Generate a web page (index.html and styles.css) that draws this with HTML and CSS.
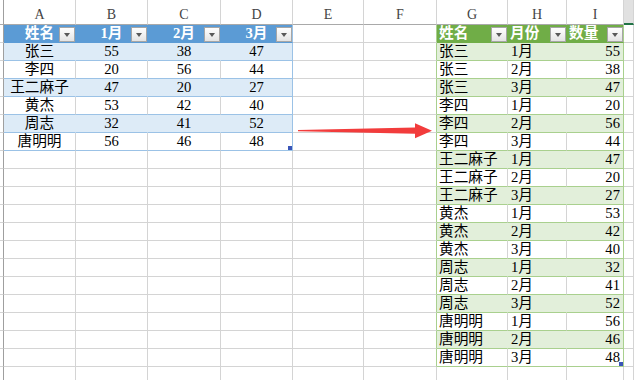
FILE: index.html
```html
<!DOCTYPE html>
<html lang="zh">
<head>
<meta charset="utf-8">
<title>Sheet</title>
<link rel="stylesheet" href="styles.css">
</head>
<body>
<div class="sheet">
  <div class="row hdr">
    <div class="c rhd"></div>
    <div class="c ch">A</div><div class="c ch">B</div><div class="c ch">C</div><div class="c ch">D</div>
    <div class="c ch">E</div><div class="c ch">F</div><div class="c ch">G</div><div class="c ch">H</div>
    <div class="c ch">I</div><div class="c ch sel"></div>
  </div>

  <div class="row">
    <div class="c rhd"></div>
    <div class="c lh ctr">姓名<span class="dd"></span></div>
    <div class="c lh ctr">1月<span class="dd"></span></div>
    <div class="c lh ctr">2月<span class="dd"></span></div>
    <div class="c lh le ctr">3月<span class="dd"></span></div>
    <div class="c"></div><div class="c fe"></div>
    <div class="c gh">姓名<span class="dd"></span></div>
    <div class="c gh">月份<span class="dd"></span></div>
    <div class="c gh ge">数量<span class="dd"></span></div>
    <div class="c"></div>
  </div>

  <div class="row">
    <div class="c rhd"></div>
    <div class="c l1 ctr">张三</div><div class="c l1 ctr">55</div><div class="c l1 ctr">38</div><div class="c l1 le ctr">47</div>
    <div class="c"></div><div class="c fe"></div>
    <div class="c g1 nm">张三</div><div class="c g1 mo">1月</div><div class="c g1 ge num">55</div>
    <div class="c"></div>
  </div>

  <div class="row">
    <div class="c rhd"></div>
    <div class="c l0 ctr">李四</div><div class="c l0 ctr">20</div><div class="c l0 ctr">56</div><div class="c l0 le ctr">44</div>
    <div class="c"></div><div class="c fe"></div>
    <div class="c g0 nm">张三</div><div class="c g0 mo">2月</div><div class="c g0 ge num">38</div>
    <div class="c"></div>
  </div>

  <div class="row">
    <div class="c rhd"></div>
    <div class="c l1 ctr">王二麻子</div><div class="c l1 ctr">47</div><div class="c l1 ctr">20</div><div class="c l1 le ctr">27</div>
    <div class="c"></div><div class="c fe"></div>
    <div class="c g1 nm">张三</div><div class="c g1 mo">3月</div><div class="c g1 ge num">47</div>
    <div class="c"></div>
  </div>

  <div class="row">
    <div class="c rhd"></div>
    <div class="c l0 ctr">黄杰</div><div class="c l0 ctr">53</div><div class="c l0 ctr">42</div><div class="c l0 le ctr">40</div>
    <div class="c"></div><div class="c fe"></div>
    <div class="c g0 nm">李四</div><div class="c g0 mo">1月</div><div class="c g0 ge num">20</div>
    <div class="c"></div>
  </div>

  <div class="row">
    <div class="c rhd"></div>
    <div class="c l1 ctr">周志</div><div class="c l1 ctr">32</div><div class="c l1 ctr">41</div><div class="c l1 le ctr">52</div>
    <div class="c"></div><div class="c fe"></div>
    <div class="c g1 nm">李四</div><div class="c g1 mo">2月</div><div class="c g1 ge num">56</div>
    <div class="c"></div>
  </div>

  <div class="row">
    <div class="c rhd"></div>
    <div class="c l0 ctr">唐明明</div><div class="c l0 ctr">56</div><div class="c l0 ctr">46</div><div class="c l0 le ctr">48<span class="handle"></span></div>
    <div class="c"></div><div class="c fe"></div>
    <div class="c g0 nm">李四</div><div class="c g0 mo">3月</div><div class="c g0 ge num">44</div>
    <div class="c"></div>
  </div>

  <div class="row">
    <div class="c rhd"></div>
    <div class="c"></div><div class="c"></div><div class="c"></div><div class="c"></div>
    <div class="c"></div><div class="c fe"></div>
    <div class="c g1 nm">王二麻子</div><div class="c g1 mo">1月</div><div class="c g1 ge num">47</div>
    <div class="c"></div>
  </div>

  <div class="row">
    <div class="c rhd"></div>
    <div class="c"></div><div class="c"></div><div class="c"></div><div class="c"></div>
    <div class="c"></div><div class="c fe"></div>
    <div class="c g0 nm">王二麻子</div><div class="c g0 mo">2月</div><div class="c g0 ge num">20</div>
    <div class="c"></div>
  </div>

  <div class="row">
    <div class="c rhd"></div>
    <div class="c"></div><div class="c"></div><div class="c"></div><div class="c"></div>
    <div class="c"></div><div class="c fe"></div>
    <div class="c g1 nm">王二麻子</div><div class="c g1 mo">3月</div><div class="c g1 ge num">27</div>
    <div class="c"></div>
  </div>

  <div class="row">
    <div class="c rhd"></div>
    <div class="c"></div><div class="c"></div><div class="c"></div><div class="c"></div>
    <div class="c"></div><div class="c fe"></div>
    <div class="c g0 nm">黄杰</div><div class="c g0 mo">1月</div><div class="c g0 ge num">53</div>
    <div class="c"></div>
  </div>

  <div class="row">
    <div class="c rhd"></div>
    <div class="c"></div><div class="c"></div><div class="c"></div><div class="c"></div>
    <div class="c"></div><div class="c fe"></div>
    <div class="c g1 nm">黄杰</div><div class="c g1 mo">2月</div><div class="c g1 ge num">42</div>
    <div class="c"></div>
  </div>

  <div class="row">
    <div class="c rhd"></div>
    <div class="c"></div><div class="c"></div><div class="c"></div><div class="c"></div>
    <div class="c"></div><div class="c fe"></div>
    <div class="c g0 nm">黄杰</div><div class="c g0 mo">3月</div><div class="c g0 ge num">40</div>
    <div class="c"></div>
  </div>

  <div class="row">
    <div class="c rhd"></div>
    <div class="c"></div><div class="c"></div><div class="c"></div><div class="c"></div>
    <div class="c"></div><div class="c fe"></div>
    <div class="c g1 nm">周志</div><div class="c g1 mo">1月</div><div class="c g1 ge num">32</div>
    <div class="c"></div>
  </div>

  <div class="row">
    <div class="c rhd"></div>
    <div class="c"></div><div class="c"></div><div class="c"></div><div class="c"></div>
    <div class="c"></div><div class="c fe"></div>
    <div class="c g0 nm">周志</div><div class="c g0 mo">2月</div><div class="c g0 ge num">41</div>
    <div class="c"></div>
  </div>

  <div class="row">
    <div class="c rhd"></div>
    <div class="c"></div><div class="c"></div><div class="c"></div><div class="c"></div>
    <div class="c"></div><div class="c fe"></div>
    <div class="c g1 nm">周志</div><div class="c g1 mo">3月</div><div class="c g1 ge num">52</div>
    <div class="c"></div>
  </div>

  <div class="row">
    <div class="c rhd"></div>
    <div class="c"></div><div class="c"></div><div class="c"></div><div class="c"></div>
    <div class="c"></div><div class="c fe"></div>
    <div class="c g0 nm">唐明明</div><div class="c g0 mo">1月</div><div class="c g0 ge num">56</div>
    <div class="c"></div>
  </div>

  <div class="row">
    <div class="c rhd"></div>
    <div class="c"></div><div class="c"></div><div class="c"></div><div class="c"></div>
    <div class="c"></div><div class="c fe"></div>
    <div class="c g1 nm">唐明明</div><div class="c g1 mo">2月</div><div class="c g1 ge num">46</div>
    <div class="c"></div>
  </div>

  <div class="row">
    <div class="c rhd"></div>
    <div class="c"></div><div class="c"></div><div class="c"></div><div class="c"></div>
    <div class="c"></div><div class="c fe"></div>
    <div class="c g0 nm">唐明明</div><div class="c g0 mo">3月</div><div class="c g0 ge num">48<span class="handle"></span></div>
    <div class="c"></div>
  </div>

  <div class="row">
    <div class="c rhd"></div>
    <div class="c"></div><div class="c"></div><div class="c"></div><div class="c"></div>
    <div class="c"></div><div class="c"></div>
    <div class="c"></div><div class="c"></div><div class="c"></div>
    <div class="c"></div>
  </div>

  <svg class="arrow" width="634" height="380" viewBox="0 0 634 380" aria-hidden="true">
    <polygon points="298,130 415,127.4 415,123.3 432,130.7 415,138.3 415,133.8 298,131.3" fill="#f23c3c"/>
  </svg>
</div>
</body>
</html>
```

FILE: styles.css
```css
html, body {
  margin: 0;
  padding: 0;
  background: #fff;
}

.sheet {
  position: relative;
  width: 634px;
  height: 380px;
  overflow: hidden;
  font-family: "Liberation Serif", "Noto Sans CJK SC", sans-serif;
  font-size: 14.67px;
  color: #000;
}

.row {
  display: grid;
  grid-template-columns: 4px 72px 72px 73px 72px 71px 73px 71px 59px 57px 10px;
  height: 18px;
}

.row.hdr {
  height: 25px;
}

.c {
  position: relative;
  box-sizing: border-box;
  border-right: 1px solid #d4d4d4;
  border-bottom: 1px solid #d4d4d4;
  line-height: 17px;
  white-space: nowrap;
  overflow: visible;
}

.rhd {
  border-right-color: #9f9f9f;
}

.hdr .c {
  border-bottom-color: #a9a9a9;
}

.ch {
  text-align: center;
  color: #444;
  font-size: 14px;
  line-height: 18px;
  padding-top: 6px;
}

.ch.sel {
  background: #e1e1e1;
  border-bottom: 2px solid #217346;
}

.ctr {
  text-align: center;
}

/* left (blue) table */
.lh {
  background: #5b9bd5;
  color: #fff;
  font-weight: bold;
  border-right-color: #5b9bd5;
  border-bottom-color: #5b9bd5;
}

.l1 {
  background: #ddebf7;
  border-right-color: #ddebf7;
  border-bottom-color: #9bc2e6;
}

.l0 {
  border-bottom-color: #9bc2e6;
}

.le {
  border-right-color: #9bc2e6;
}

/* right (green) table */
.fe {
  border-right-color: #a9d08e;
}

.gh {
  background: #70ad47;
  color: #fff;
  font-weight: bold;
  padding-left: 2px;
  border-right-color: #70ad47;
  border-bottom-color: #70ad47;
}

.g1 {
  background: #e2efda;
  border-right-color: #e2efda;
  border-bottom-color: #a9d08e;
}

.g0 {
  border-bottom-color: #a9d08e;
}

.ge {
  border-right-color: #a9d08e;
}

.nm {
  padding-left: 2px;
}

.mo {
  padding-left: 3px;
}

.num {
  text-align: right;
  padding-right: 3px;
}

/* filter dropdown button */
.dd {
  position: absolute;
  right: 0;
  top: 2px;
  width: 16px;
  height: 15px;
  box-sizing: border-box;
  border: 1px solid #a6a6a6;
  background: linear-gradient(#ffffff, #e4e4e4);
}

.dd::after {
  content: "";
  position: absolute;
  left: 4px;
  top: 5px;
  width: 0;
  height: 0;
  border-left: 3.5px solid transparent;
  border-right: 3.5px solid transparent;
  border-top: 4px solid #595959;
}

/* table resize handle */
.handle {
  position: absolute;
  right: 0;
  bottom: 0;
  width: 4px;
  height: 4px;
  background: #3a55b8;
}

.arrow {
  position: absolute;
  left: 0;
  top: 0;
  pointer-events: none;
}
```
